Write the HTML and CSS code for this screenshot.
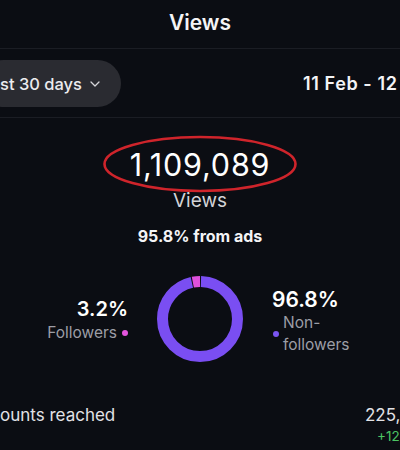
FILE: index.html
```html
<!DOCTYPE html>
<html lang="en">
<head>
<meta charset="utf-8">
<title>Views</title>
<link rel="stylesheet" href="styles.css">
</head>
<body>
<div class="page">
  <header class="header">Views</header>

  <div class="range-row">
    <div class="pill">
      <span class="pill-text">st 30 days</span>
      <svg class="chevron" width="10" height="6" viewBox="0 0 10 6"><path d="M1 1 L5 5 L9 1" fill="none" stroke="#d6d6da" stroke-width="1.3" stroke-linecap="round" stroke-linejoin="round"/></svg>
    </div>
    <div class="dates">11 Feb - 12</div>
  </div>

  <section class="summary">
    <div class="total">
      <span class="total-num">1,109,089</span>
      <svg class="ring-mark" width="196" height="60" viewBox="0 0 196 60"><ellipse cx="98" cy="30" rx="95.5" ry="27" fill="none" stroke="#cf242b" stroke-width="2.6"/></svg>
    </div>
    <div class="total-label">Views</div>
    <div class="ads">95.8% from ads</div>
  </section>

  <section class="split">
    <div class="side side-left">
      <div class="pct">3.2%</div>
      <div class="legend">
        <span class="legend-text">Followers</span>
        <span class="dot dot-pink"></span>
      </div>
    </div>
    <svg class="donut" width="86" height="86" viewBox="0 0 86 86">
      <g transform="rotate(-90 43 43)">
        <circle cx="43" cy="43" r="37.5" fill="none" stroke="#7a4ef2" stroke-width="11" stroke-dasharray="226 9.62" stroke-dashoffset="-1"/>
        <circle cx="43" cy="43" r="37.5" fill="none" stroke="#e050dc" stroke-width="11" stroke-dasharray="7.6 228" stroke-dashoffset="-228"/>
      </g>
    </svg>
    <div class="side side-right">
      <div class="pct">96.8%</div>
      <div class="legend">
        <span class="dot dot-purple"></span>
        <span class="legend-text">Non-<br>followers</span>
      </div>
    </div>
  </section>

  <div class="metric-row">
    <div class="metric-name">ounts reached</div>
    <div class="metric-values">
      <div class="metric-num">225,</div>
      <div class="metric-delta">+12</div>
    </div>
  </div>
</div>
</body>
</html>
```

FILE: styles.css
```css
html, body {
  margin: 0;
  padding: 0;
  background: #0b0d13;
}

body {
  font-family: Inter, "Noto Sans", "Liberation Sans", sans-serif;
  color: #f4f4f6;
}

.page {
  width: 400px;
  height: 450px;
  overflow: hidden;
  background: #0b0d13;
}

.header {
  font-size: 21px;
  font-weight: 600;
  line-height: 45px;
  padding-bottom: 3px;
  text-align: center;
  border-bottom: 1px solid #1b1d24;
}

.range-row {
  display: grid;
  grid-template-columns: 303px auto;
  align-items: center;
  padding: 11px 0 10px;
  border-bottom: 1px solid #1b1d24;
}

.pill {
  justify-self: start;
  margin-left: -20px;
  height: 47px;
  box-sizing: border-box;
  padding: 0 21px 0 20px;
  border-radius: 24px;
  background: #2a2b31;
  display: flex;
  align-items: center;
  gap: 8px;
  white-space: nowrap;
}

.pill-text {
  font-size: 16.5px;
  font-weight: 500;
  color: #ececef;
}

.chevron {
  display: block;
  margin-top: 1px;
}

.dates {
  font-size: 18px;
  font-weight: 600;
  letter-spacing: 0.6px;
  white-space: nowrap;
  color: #f4f4f6;
}

.summary {
  display: flex;
  flex-direction: column;
  align-items: center;
  padding-top: 29px;
}

.total {
  position: relative;
  display: flex;
  justify-content: center;
}

.total-num {
  font-size: 30.5px;
  line-height: 35px;
  letter-spacing: 0.8px;
  font-weight: 400;
  color: #ffffff;
}

.ring-mark {
  position: absolute;
  left: 50%;
  top: 50%;
  transform: translate(-50%, -50%);
  margin-top: -0.5px;
}

.total-label {
  margin-top: 7px;
  font-size: 19px;
  line-height: 23px;
  color: #d4d4d8;
}

.ads {
  margin-top: 15px;
  font-size: 16px;
  line-height: 19px;
  font-weight: 650;
  color: #f4f4f6;
}

.split {
  margin-top: 30px;
  display: flex;
  justify-content: center;
  align-items: center;
  gap: 29px;
}

.side {
  width: 90px;
  display: flex;
  flex-direction: column;
}

.side-left {
  align-items: flex-end;
  text-align: right;
  margin-top: 3px;
}

.side-right {
  align-items: flex-start;
  margin-top: 6px;
}

.pct {
  font-size: 20px;
  line-height: 24px;
  font-weight: 600;
  color: #ffffff;
}

.side-right .pct {
  font-size: 21px;
}

.legend {
  display: flex;
  align-items: center;
  gap: 5px;
}

.side-left .legend {
  margin-top: 1px;
}

.side-right .legend {
  padding-left: 1px;
  gap: 4px;
}

.legend-text {
  font-size: 15.5px;
  line-height: 22px;
  color: #9d9ea6;
}

.dot {
  width: 6px;
  height: 6px;
  border-radius: 50%;
  flex-shrink: 0;
}

.dot-pink {
  background: #e455de;
}

.dot-purple {
  background: #7b55f2;
}

.metric-row {
  margin-top: 43px;
  display: grid;
  grid-template-columns: 365px auto;
}

.metric-name {
  font-size: 17px;
  line-height: 21px;
  color: #e2e2e6;
  white-space: nowrap;
}

.metric-values {
  white-space: nowrap;
}

.metric-num {
  font-size: 17px;
  line-height: 21px;
  color: #e2e2e6;
}

.metric-delta {
  margin-top: 2px;
  margin-left: 12px;
  font-size: 13.5px;
  line-height: 17px;
  color: #4cc463;
}
```
